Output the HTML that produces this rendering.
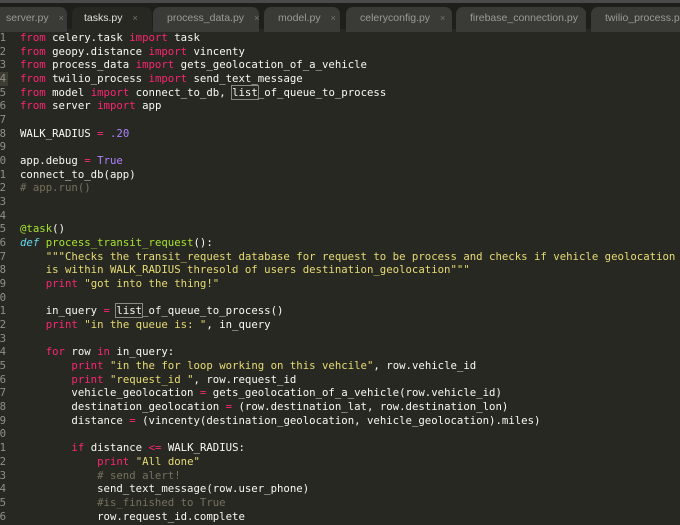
<!DOCTYPE html>
<html><head><meta charset="utf-8"><style>
html,body{margin:0;padding:0;width:680px;height:525px;overflow:hidden;background:#272822;}
.bar{position:absolute;left:0;top:0;width:680px;height:29px;background:#1e1f1b;border-top:3px solid #4a4a4a;box-sizing:border-box;}
.tab{position:absolute;top:4px;height:25px;background:#3a3b37;border-radius:7px 7px 0 0;font:10.5px "Liberation Sans",sans-serif;color:#9a9a95;line-height:22px;box-sizing:border-box;padding-left:14px;white-space:nowrap;overflow:hidden;}
.tab.a{background:#272822;color:#e0e0dc;}
.tab i{font-style:normal;color:#77776f;margin-left:10px;font-size:9px;}
.code{position:absolute;left:20px;top:31px;font:10.68px/13.67px "DejaVu Sans Mono",monospace;color:#f8f8f2;white-space:pre;}
.gut{position:absolute;left:-7px;top:31px;font:10.68px/13.67px "DejaVu Sans Mono",monospace;color:#8f908a;white-space:pre;text-align:right;width:13px;}
.k{color:#f92672}.s{color:#e6db74}.d{color:#66d9ef;font-style:italic}.f{color:#a6e22e}.n{color:#ae81ff}.c{color:#75715e}
.box{outline:1px solid #8a8a85;outline-offset:0}
.hl{position:absolute;left:0;top:72px;width:8px;height:14px;background:#3e3d32;}
</style></head><body>
<div class="bar">
<div class="tab" style="left:-8px;width:75px;">server.py<i>×</i></div>
<div class="tab a" style="left:72px;width:80px;padding-left:12px;">tasks.py<i>×</i></div>
<div class="tab" style="left:153px;width:106px;">process_data.py<i>×</i></div>
<div class="tab" style="left:264px;width:76px;">model.py<i>×</i></div>
<div class="tab" style="left:346px;width:106px;">celeryconfig.py<i>×</i></div>
<div class="tab" style="left:456px;width:130px;">firebase_connection.py<i>×</i></div>
<div class="tab" style="left:591px;width:100px;">twilio_process.py</div>
</div>
<div class="hl"></div>
<div class="gut">1
2
3
4
5
6
7
8
9
0
1
2
3
4
5
6
7
8
9
0
1
2
3
4
5
6
7
8
9
0
1
2
3
4
5
6</div>
<div class="code"><span class="k">from</span> celery.task <span class="k">import</span> task
<span class="k">from</span> geopy.distance <span class="k">import</span> vincenty
<span class="k">from</span> process_data <span class="k">import</span> gets_geolocation_of_a_vehicle
<span class="k">from</span> twilio_process <span class="k">import</span> send_text_message
<span class="k">from</span> model <span class="k">import</span> connect_to_db, <span class="box">list</span>_of_queue_to_process
<span class="k">from</span> server <span class="k">import</span> app

WALK_RADIUS <span class="k">=</span> <span class="n">.20</span>

app.debug <span class="k">=</span> <span class="n">True</span>
connect_to_db(app)
<span class="c"># app.run()</span>


<span class="f">@task</span>()
<span class="d">def</span> <span class="f">process_transit_request</span>():
    <span class="s">"""Checks the transit_request database for request to be process and checks if vehicle geolocation
    is within WALK_RADIUS thresold of users destination_geolocation"""</span>
    <span class="k">print</span> <span class="s">"got into the thing!"</span>

    in_query <span class="k">=</span> <span class="box">list</span>_of_queue_to_process()
    <span class="k">print</span> <span class="s">"in the queue is: "</span>, in_query

    <span class="k">for</span> row <span class="k">in</span> in_query:
        <span class="k">print</span> <span class="s">"in the for loop working on this vehcile"</span>, row.vehicle_id
        <span class="k">print</span> <span class="s">"request_id "</span>, row.request_id
        vehicle_geolocation <span class="k">=</span> gets_geolocation_of_a_vehicle(row.vehicle_id)
        destination_geolocation <span class="k">=</span> (row.destination_lat, row.destination_lon)
        distance <span class="k">=</span> (vincenty(destination_geolocation, vehicle_geolocation).miles)

        <span class="k">if</span> distance <span class="k">&lt;=</span> WALK_RADIUS:
            <span class="k">print</span> <span class="s">"All done"</span>
            <span class="c"># send alert!</span>
            send_text_message(row.user_phone)
            <span class="c">#is_finished to True</span>
            row.request_id.complete</div>
</body></html>
